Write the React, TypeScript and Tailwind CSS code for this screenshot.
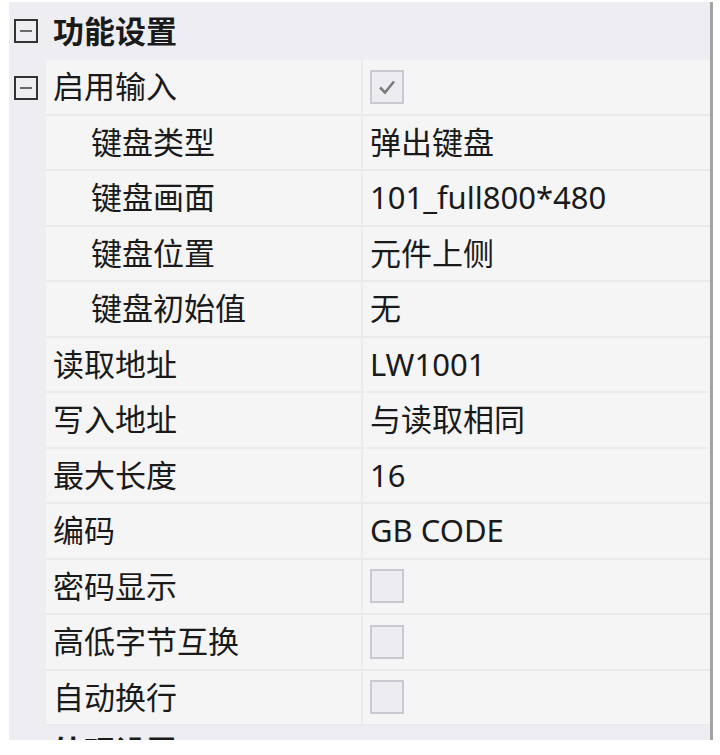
import React from "react";

const font = { fontFamily: '"Noto Sans", "Noto Sans CJK SC", sans-serif' };

function Minus() {
  return (
    <svg width="24" height="24" viewBox="0 0 24 24" className="block">
      <rect x="1" y="1" width="22" height="22" fill="none" stroke="#333333" strokeWidth="2" />
      <line x1="6" y1="12" x2="18" y2="12" stroke="#6a6a6a" strokeWidth="2" />
    </svg>
  );
}

function Check({ checked }: { checked?: boolean }) {
  return (
    <div className="w-[34px] h-[34px] border-2 border-[#c9c9d2] bg-[#ececf1] flex items-center justify-center">
      {checked && (
        <svg width="22" height="22" viewBox="0 0 22 22">
          <path d="M4 11.5 L9 16.5 L18 5.5" fill="none" stroke="#7c7c7c" strokeWidth="2.6" />
        </svg>
      )}
    </div>
  );
}

type Row = { label: string; value?: string; check?: "on" | "off"; indent?: boolean; expand?: boolean };

const rows: Row[] = [
  { label: "启用输入", check: "on", expand: true },
  { label: "键盘类型", value: "弹出键盘", indent: true },
  { label: "键盘画面", value: "101_full800*480", indent: true },
  { label: "键盘位置", value: "元件上侧", indent: true },
  { label: "键盘初始值", value: "无", indent: true },
  { label: "读取地址", value: "LW1001" },
  { label: "写入地址", value: "与读取相同" },
  { label: "最大长度", value: "16" },
  { label: "编码", value: "GB CODE" },
  { label: "密码显示", check: "off" },
  { label: "高低字节互换", check: "off" },
  { label: "自动换行", check: "off" },
];

export default function App() {
  return (
    <div className="w-[720px] h-[755px] bg-white pt-[2px] pl-[9px]" style={font}>
      <div className="w-[704px] h-[738px] overflow-hidden bg-[#eeeef2] border-r-[3px] border-[#a3a3a3] text-[31px] text-[#1a1a1a] leading-none">
        <div className="h-[58px] flex items-center">
          <div className="w-[37px] pl-[5px]">
            <Minus />
          </div>
          <div className="pl-[7px] font-bold">功能设置</div>
        </div>
        {rows.map((r, i) => (
          <div key={i} className="h-[55.5px] flex">
            <div className="w-[37px] pl-[5px] flex items-center">{r.expand && <Minus />}</div>
            <div className="flex-1 flex bg-[#f5f5f5] border-b-2 border-[#ebebed]">
              <div className={`w-[317px] flex items-center border-r-2 border-[#ebebed] ${r.indent ? "pl-[45px]" : "pl-[7px]"}`}>
                {r.label}
              </div>
              <div className="flex-1 flex items-center pl-[7px]">
                {r.check ? <Check checked={r.check === "on"} /> : r.value}
              </div>
            </div>
          </div>
        ))}
        <div className="h-[55px] flex items-start">
          <div className="w-[37px]" />
          <div className="pl-[7px] pt-[10px] font-bold">外观设置</div>
        </div>
      </div>
    </div>
  );
}
